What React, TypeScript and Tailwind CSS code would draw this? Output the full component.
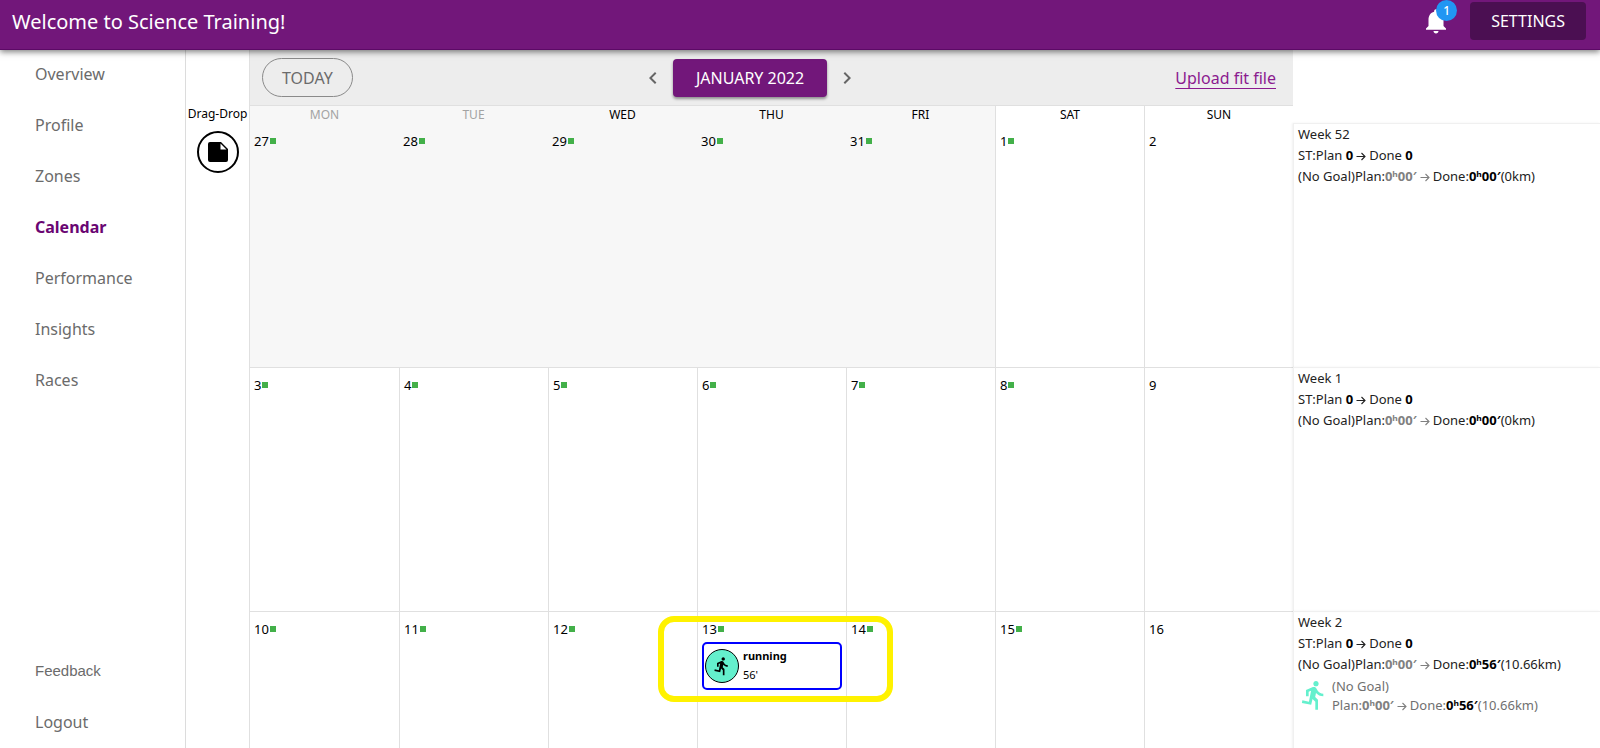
import React from "react";

const RUN_PATH =
  "M13.49 5.48c1.1 0 2-.9 2-2s-.9-2-2-2-2 .9-2 2 .9 2 2 2zm-3.6 13.9l1-4.4 2.1 2v6h2v-7.5l-2.1-2 .6-3c1.3 1.5 3.3 2.5 5.5 2.5v-2c-1.9 0-3.5-1-4.3-2.4l-1-1.6c-.4-.6-1-1-1.7-1-.3 0-.5.1-.8.1l-5.2 2.2v4.7h2v-3.4l1.8-.7-1.6 8.1-4.9-1-.4 2 7 1.4z";

function Icon({ d, className }: { d: string; className: string }) {
  return (
    <svg viewBox="0 0 24 24" className={className} fill="currentColor" aria-hidden="true">
      <path d={d} />
    </svg>
  );
}

function Arrow() {
  return (
    <svg viewBox="0 0 10 9" className="mx-[3px] inline h-[9px] w-2.5" fill="none" stroke="currentColor" aria-hidden="true">
      <path d="M0.500 4.500H9M5.500 1L9 4.500L5.500 8" strokeWidth="1.1" />
    </svg>
  );
}

const NAV = ["Overview", "Profile", "Zones", "Calendar", "Performance", "Insights", "Races"];

function Sidebar() {
  return (
    <nav className="flex w-[186px] shrink-0 flex-col justify-between border-r border-[#dcdcdc] pb-0.5 text-base text-[#6b6b6b]">
      <ul className="flex flex-col gap-[3px]">
        {NAV.map((name) => (
          <li key={name}>
            <a
              href="#"
              className={
                name === "Calendar"
                  ? "flex h-12 items-center pl-[35px] font-bold text-[#6a0572]"
                  : "flex h-12 items-center pl-[35px]"
              }
            >
              {name}
            </a>
          </li>
        ))}
      </ul>
      <ul className="flex flex-col gap-[3px]">
        <li>
          <button className="flex h-12 items-center pl-[35px] font-['Liberation_Sans',sans-serif] text-[15px]">
            Feedback
          </button>
        </li>
        <li>
          <a href="#" className="flex h-12 items-center pl-[35px]">
            Logout
          </a>
        </li>
      </ul>
    </nav>
  );
}

function Header() {
  return (
    <header className="relative z-10 flex h-[50px] shrink-0 justify-between border-b border-[#5c0a66] bg-[#72177a] pr-3.5 pl-3 text-white shadow-[0_2px_6px_rgba(0,0,0,0.5)]">
      <h1 className="flex h-11 items-center text-xl">Welcome to Science Training!</h1>
      <div className="flex items-start gap-[19px] pt-0.5">
        <button aria-label="Notifications" className="relative mt-1">
          <Icon
            className="h-[30px] w-[30px]"
            d="M12 22c1.1 0 2-.9 2-2h-4c0 1.1.89 2 2 2zm6-6v-5c0-3.07-1.64-5.64-4.5-6.32V4c0-.83-.67-1.5-1.5-1.5s-1.500.67-1.500 1.500v.68C7.63 5.36 6 7.920 6 11v5l-2 2v1h16v-1l-2-2z"
          />
          <span className="absolute -top-1.5 left-[15px] flex h-[21px] w-[21px] items-center justify-center rounded-full bg-[#2196f3] text-xs font-medium">
            1
          </span>
        </button>
        <button className="h-[38px] rounded bg-[#4b0f52] px-[21px] text-base">SETTINGS</button>
      </div>
    </header>
  );
}

function Toolbar() {
  return (
    <div className="flex h-[55px] items-center justify-between bg-[#ededed] pr-[17px] pl-3">
      <button className="h-[39px] rounded-full border border-[#8a8a8a] px-[19px] text-base text-[#6b6b6b]">
        TODAY
      </button>
      <div className="flex items-center gap-2 text-[#666666]">
        <button aria-label="Previous month">
          <Icon className="h-6 w-6" d="M15.41 7.41L14 6l-6 6 6 6 1.41-1.41L10.83 12z" />
        </button>
        <button className="h-[38px] rounded bg-[#72177a] px-[23px] text-base text-white shadow-[0_2px_3px_rgba(0,0,0,0.4)]">
          JANUARY 2022
        </button>
        <button aria-label="Next month">
          <Icon className="h-6 w-6" d="M10 6L8.59 7.41 13.17 12l-4.58 4.59L10 18l6-6z" />
        </button>
      </div>
      <a href="#" className="pl-7 text-base text-[#8b1a8f] underline underline-offset-4">
        Upload fit file
      </a>
    </div>
  );
}

const DAYS = ["MON", "TUE", "WED", "THU", "FRI", "SAT", "SUN"];
const WEEKS = [
  [27, 28, 29, 30, 31, 1, 2],
  [3, 4, 5, 6, 7, 8, 9],
  [10, 11, 12, 13, 14, 15, 16],
];

function Activity() {
  return (
    <div className="relative">
      <button className="mt-1 flex h-12 w-full items-center gap-1 rounded-[5px] border-2 border-[#0000ff] bg-white pl-px text-left">
        <span className="flex h-[34px] w-[34px] items-center justify-center rounded-full border border-black bg-[#64f0cd]">
          <Icon className="h-5 w-5" d={RUN_PATH} />
        </span>
        <span className="flex flex-col pb-0.5 text-[11px] leading-[19px]">
          <b>running</b>
          <span>56'</span>
        </span>
      </button>
      <div className="pointer-events-none absolute -top-[26px] -right-[51px] -bottom-3 -left-11 rounded-[16px] border-6 border-[#fff200]" />
    </div>
  );
}

function Month() {
  return (
    <table className="w-full table-fixed border-separate border-spacing-0 text-[13px]">
      <thead>
        <tr>
          {DAYS.map((day, i) => (
            <th
              key={day}
              className={
                i < 2
                  ? "h-[18px] border-t border-[#e0e0e0] bg-[#f7f7f7] p-0 text-xs leading-4 font-normal text-[#a3a3a3]"
                  : i < 5
                    ? "h-[18px] border-t border-[#e0e0e0] bg-[#f7f7f7] p-0 text-xs leading-4 font-normal"
                    : "h-[18px] border-t border-l border-[#e0e0e0] p-0 text-xs leading-4 font-normal"
              }
            >
              {day}
            </th>
          ))}
        </tr>
      </thead>
      <tbody>
        {WEEKS.map((week, w) => (
          <tr key={w}>
            {week.map((day, i) => (
              <td
                key={day}
                className={
                  w === 0
                    ? i < 5
                      ? "h-[244px] bg-[#f7f7f7] px-1 pt-[9px] align-top"
                      : "h-[244px] border-l border-[#e0e0e0] px-1 pt-[9px] align-top"
                    : i === 0
                      ? "h-[244px] border-t border-[#e0e0e0] px-1 pt-2 align-top"
                      : "h-[244px] border-t border-l border-[#e0e0e0] px-1 pt-2 align-top"
                }
              >
                <div className="flex items-center gap-px leading-[18px]">
                  {day}
                  {i < 6 && <span className="h-1.5 w-1.5 bg-[#43b049]" />}
                </div>
                {day === 13 && <Activity />}
              </td>
            ))}
          </tr>
        ))}
      </tbody>
    </table>
  );
}

function Totals({ done, km }: { done: string; km: string }) {
  return (
    <>
      Plan:
      <span className="text-[#808080]">
        <b>0ʰ00′</b>
        <Arrow />
      </span>
      Done:<b className="text-black">0ʰ{done}′</b>({km}km)
    </>
  );
}

const SUMMARY = [
  { week: 52, done: "00", km: "0", run: false },
  { week: 1, done: "00", km: "0", run: false },
  { week: 2, done: "56", km: "10.66", run: true },
];

function Summary() {
  return (
    <aside className="w-[307px] shrink-0 pt-[73px] text-[13px] whitespace-nowrap text-[#222222]">
      {SUMMARY.map((s) => (
        <section
          key={s.week}
          className="h-[244px] border-t border-l border-[#f0f0f0] pl-1 leading-[21px] shadow-[-1px_0_2px_rgba(0,0,0,0.06)]"
        >
          <h2>Week {s.week}</h2>
          <p>
            ST:Plan <b className="text-black">0</b>
            <Arrow />
            Done <b className="text-black">0</b>
          </p>
          <p>
            (No Goal)
            <Totals done={s.done} km={s.km} />
          </p>
          {s.run && (
            <div className="flex gap-0.5 pt-0.5 text-[#707070]">
              <Icon className="mt-0.5 h-8 w-8 text-[#64f0cd]" d={RUN_PATH} />
              <div className="leading-[19px]">
                <p>(No Goal)</p>
                <p>
                  <Totals done={s.done} km={s.km} />
                </p>
              </div>
            </div>
          )}
        </section>
      ))}
    </aside>
  );
}

export default function App() {
  return (
    <div className="flex h-screen flex-col overflow-hidden bg-white font-['Noto_Sans',sans-serif] text-black">
      <Header />
      <div className="flex min-h-0 flex-1">
        <Sidebar />
        <div className="flex w-16 shrink-0 flex-col items-center border-r border-[#e0e0e0] pt-[55px]">
          <span className="text-xs leading-[18px]">Drag-Drop</span>
          <button
            aria-label="Drag a note"
            className="mt-2 flex h-[42px] w-[42px] items-center justify-center rounded-full border-2 border-black"
          >
            <Icon
              className="h-6 w-6"
              d="M4 2h11l7 7v11a2 2 0 0 1-2 2H4a2 2 0 0 1-2-2V4a2 2 0 0 1 2-2zM14.5 3.500V9.500H20.500z"
            />
          </button>
        </div>
        <main className="min-w-0 flex-1">
          <Toolbar />
          <Month />
        </main>
        <Summary />
      </div>
    </div>
  );
}
